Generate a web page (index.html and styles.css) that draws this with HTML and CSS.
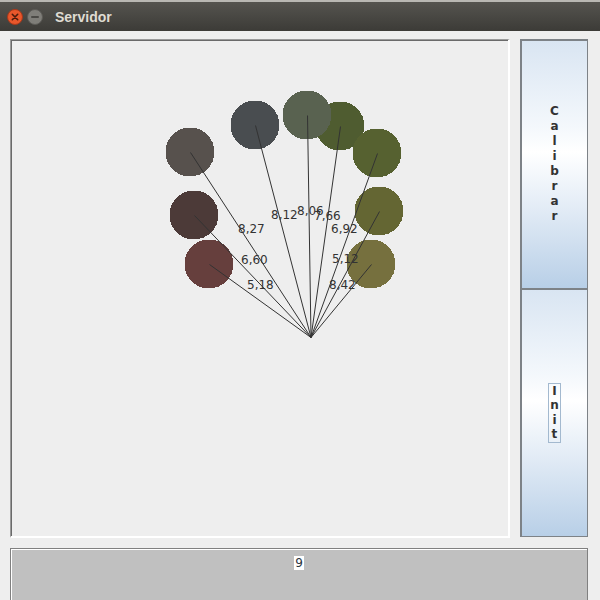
FILE: index.html
```html
<!DOCTYPE html>
<html>
<head>
<meta charset="utf-8">
<link rel="stylesheet" href="styles.css">
</head>
<body>
<div class="titlebar">
  <div class="wbtn close"><svg width="16" height="16" viewBox="0 0 16 16"><circle cx="8" cy="8" r="7.5" fill="#e9572b" stroke="#a8391b" stroke-width="1"/><path d="M5.3 5.3 L10.7 10.7 M10.7 5.3 L5.3 10.7" stroke="#4a1a0c" stroke-width="1.6" stroke-linecap="round"/></svg></div>
  <div class="wbtn"><svg width="16" height="16" viewBox="0 0 16 16"><circle cx="8" cy="8" r="7.5" fill="#7f7e79" stroke="#5c5b57" stroke-width="1"/><path d="M4.8 8 L11.2 8" stroke="#3b3a36" stroke-width="1.6" stroke-linecap="round"/></svg></div>
  <span class="title">Servidor</span>
</div>
<div class="content">
  <div class="main">
    <div class="canvas">
      <svg width="497" height="496" viewBox="12 41 497 496">
        <g shape-rendering="crispEdges">
          <circle cx="190" cy="152" r="24.5" fill="#57514d"/>
          <circle cx="255" cy="125" r="24.5" fill="#494d50"/>
          <circle cx="340" cy="126" r="24.5" fill="#4f5c30"/>
          <circle cx="307" cy="115" r="24.5" fill="#596250"/>
          <circle cx="377" cy="153" r="24.5" fill="#566130"/>
          <circle cx="194" cy="215" r="24.5" fill="#4c3a38"/>
          <circle cx="209" cy="264" r="24.5" fill="#663f3d"/>
          <circle cx="379" cy="211" r="24.5" fill="#646633"/>
          <circle cx="371" cy="264" r="24.5" fill="#76703e"/>
        </g>
        <g stroke="#333" stroke-width="1">
          <line x1="190.5" y1="152.5" x2="311" y2="337.5"/>
          <line x1="255.5" y1="125.5" x2="311" y2="337.5"/>
          <line x1="307.5" y1="115.5" x2="311" y2="337.5"/>
          <line x1="340.5" y1="126.5" x2="311" y2="337.5"/>
          <line x1="377.5" y1="153.5" x2="311" y2="337.5"/>
          <line x1="194.5" y1="215.5" x2="311" y2="337.5"/>
          <line x1="209.5" y1="264.5" x2="311" y2="337.5"/>
          <line x1="379.5" y1="211.5" x2="311" y2="337.5"/>
          <line x1="371.5" y1="264.5" x2="311" y2="337.5"/>
        </g>
        <g class="lbl">
          <text x="238" y="233">8,27</text>
          <text x="271" y="219">8,12</text>
          <text x="297" y="215">8,06</text>
          <text x="314" y="220">7,66</text>
          <text x="331" y="233">6,92</text>
          <text x="241" y="264">6,60</text>
          <text x="332" y="263">5,12</text>
          <text x="247" y="289">5,18</text>
          <text x="329" y="289">8,42</text>
        </g>
      </svg>
    </div>
  </div>
  <div class="side">
    <div class="btn"><div class="vtext"><span>C</span><span>a</span><span>l</span><span>i</span><span>b</span><span>r</span><span>a</span><span>r</span></div></div>
    <div class="btn"><div class="vtext focus"><span>I</span><span>n</span><span>i</span><span>t</span></div></div>
  </div>
</div>
<div class="bottom"><span class="num">9</span></div>
</body>
</html>
```
FILE: styles.css
```css
html, body {
  margin: 0;
  padding: 0;
  background: #eeeeee;
  font-family: "DejaVu Sans", sans-serif;
  overflow: hidden;
}
.titlebar {
  height: 31px;
  background: linear-gradient(#55544f, #3c3b37);
  display: flex;
  align-items: center;
  padding-left: 7px;
  gap: 4px;
  box-sizing: border-box;
  border-top: 2px solid #b9b8b3;
}
.wbtn {
  width: 16px;
  height: 16px;
  display: flex;
}
.title {
  font-family: "Liberation Sans", sans-serif;
  font-weight: bold;
  font-size: 14px;
  color: #dfdbd2;
  margin-left: 8px;
}
.content {
  display: grid;
  grid-template-columns: 500px 68px;
  column-gap: 10px;
  padding: 8px 0 0 10px;
}
.main {
  box-sizing: border-box;
  width: 500px;
  height: 499px;
  border-top: 1px solid #9a9a9a;
  border-left: 1px solid #9a9a9a;
  border-right: 2px solid #ffffff;
  border-bottom: 2px solid #ffffff;
  box-shadow: inset 1px 1px 0 #6a6a6a;
  background: #eeeeee;
}
.canvas {
  padding: 1px 0 0 1px;
}
.canvas svg {
  display: block;
}
.lbl text {
  font-family: "DejaVu Sans", sans-serif;
  font-size: 12px;
  fill: #333333;
}
.side {
  display: flex;
  flex-direction: column;
  height: 498px;
}
.btn {
  flex: 1;
  box-sizing: border-box;
  border-top: 2px solid #7d8287;
  border-left: 2px solid #7d8287;
  border-right: 1px solid #7d8287;
  border-bottom: 1px solid #7d8287;
  background: linear-gradient(#d9e5f2 0%, #f4f8fc 35%, #ffffff 45%, #e6eef7 65%, #b8cfe7 100%);
  display: flex;
  align-items: center;
  justify-content: center;
}
.btn + .btn {
  border-top: 1px solid #7d8287;
}
.vtext {
  display: flex;
  flex-direction: column;
  align-items: center;
  font-weight: bold;
  font-size: 12px;
  line-height: 15px;
  color: #333333;
}
.focus {
  border: 1px solid #a3b9cf;
  padding: 0 1px;
  line-height: 14.5px;
}
.bottom {
  box-sizing: border-box;
  margin: 10px 12px 0 10px;
  height: 60px;
  background: #c0c0c0;
  border: 1px solid #808080;
  box-shadow: inset 1px 1px 0 #ffffff;
  display: flex;
  justify-content: center;
  padding-top: 7px;
}
.num {
  background: #ffffff;
  font-size: 12px;
  line-height: 14px;
  height: 14px;
  color: #2a3540;
  padding: 0 1px;
}
```
